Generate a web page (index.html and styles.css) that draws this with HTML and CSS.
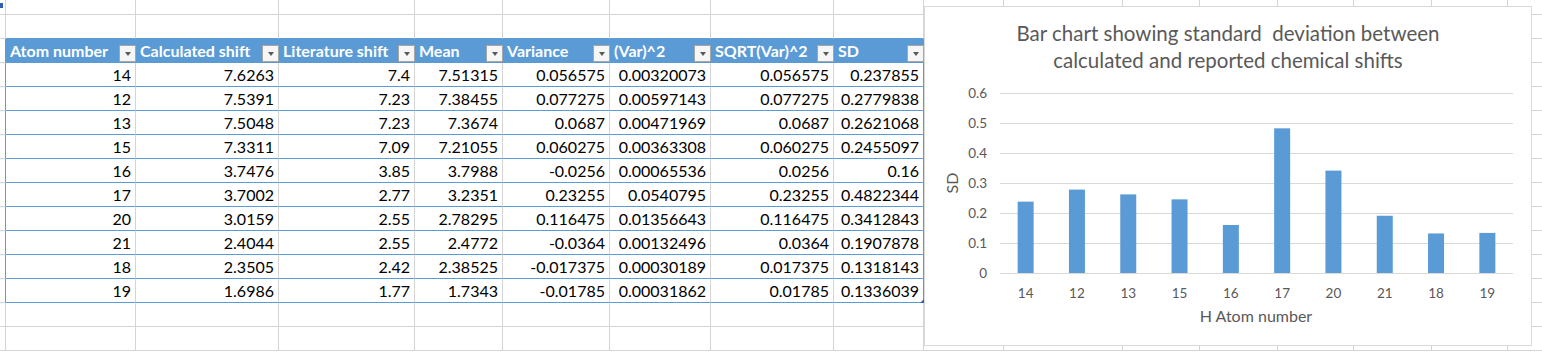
FILE: index.html
```html
<!DOCTYPE html>
<html lang="en">
<head>
    <meta charset="UTF-8">
    <title>Chemical shifts</title>
    <link rel="stylesheet" href="styles.css">
</head>
<body>
    <span class="mark"></span>
    <div class="sheet">
        <div class="row"><div></div><div></div><div></div><div></div><div></div><div></div><div></div><div></div><div></div><div></div><div></div><div></div><div></div><div></div><div></div><div></div><div></div></div>
        <div class="row cap"><div></div><div></div><div></div><div></div><div></div><div></div><div></div><div></div><div></div><div></div><div></div><div></div><div></div><div></div><div></div><div></div><div></div></div>
        <div class="row head">
            <div></div>
            <div><span>Atom number</span><i class="dd"></i></div>
            <div><span>Calculated shift</span><i class="dd"></i></div>
            <div><span>Literature shift</span><i class="dd"></i></div>
            <div><span>Mean</span><i class="dd"></i></div>
            <div><span>Variance</span><i class="dd"></i></div>
            <div><span>(Var)^2</span><i class="dd"></i></div>
            <div><span>SQRT(Var)^2</span><i class="dd"></i></div>
            <div><span>SD</span><i class="dd"></i></div>
            <div></div><div></div><div></div><div></div><div></div><div></div><div></div><div></div>
        </div>
        <div class="row data"><div></div><div>14</div><div>7.6263</div><div>7.4</div><div>7.51315</div><div>0.056575</div><div>0.00320073</div><div>0.056575</div><div>0.237855</div><div></div><div></div><div></div><div></div><div></div><div></div><div></div><div></div></div>
        <div class="row data"><div></div><div>12</div><div>7.5391</div><div>7.23</div><div>7.38455</div><div>0.077275</div><div>0.00597143</div><div>0.077275</div><div>0.2779838</div><div></div><div></div><div></div><div></div><div></div><div></div><div></div><div></div></div>
        <div class="row data"><div></div><div>13</div><div>7.5048</div><div>7.23</div><div>7.3674</div><div>0.0687</div><div>0.00471969</div><div>0.0687</div><div>0.2621068</div><div></div><div></div><div></div><div></div><div></div><div></div><div></div><div></div></div>
        <div class="row data"><div></div><div>15</div><div>7.3311</div><div>7.09</div><div>7.21055</div><div>0.060275</div><div>0.00363308</div><div>0.060275</div><div>0.2455097</div><div></div><div></div><div></div><div></div><div></div><div></div><div></div><div></div></div>
        <div class="row data"><div></div><div>16</div><div>3.7476</div><div>3.85</div><div>3.7988</div><div>-0.0256</div><div>0.00065536</div><div>0.0256</div><div>0.16</div><div></div><div></div><div></div><div></div><div></div><div></div><div></div><div></div></div>
        <div class="row data"><div></div><div>17</div><div>3.7002</div><div>2.77</div><div>3.2351</div><div>0.23255</div><div>0.0540795</div><div>0.23255</div><div>0.4822344</div><div></div><div></div><div></div><div></div><div></div><div></div><div></div><div></div></div>
        <div class="row data"><div></div><div>20</div><div>3.0159</div><div>2.55</div><div>2.78295</div><div>0.116475</div><div>0.01356643</div><div>0.116475</div><div>0.3412843</div><div></div><div></div><div></div><div></div><div></div><div></div><div></div><div></div></div>
        <div class="row data"><div></div><div>21</div><div>2.4044</div><div>2.55</div><div>2.4772</div><div>-0.0364</div><div>0.00132496</div><div>0.0364</div><div>0.1907878</div><div></div><div></div><div></div><div></div><div></div><div></div><div></div><div></div></div>
        <div class="row data"><div></div><div>18</div><div>2.3505</div><div>2.42</div><div>2.38525</div><div>-0.017375</div><div>0.00030189</div><div>0.017375</div><div>0.1318143</div><div></div><div></div><div></div><div></div><div></div><div></div><div></div><div></div></div>
        <div class="row data last"><div></div><div>19</div><div>1.6986</div><div>1.77</div><div>1.7343</div><div>-0.01785</div><div>0.00031862</div><div>0.01785</div><div class="handle">0.1336039</div><div></div><div></div><div></div><div></div><div></div><div></div><div></div><div></div></div>
        <div class="row"><div></div><div></div><div></div><div></div><div></div><div></div><div></div><div></div><div></div><div></div><div></div><div></div><div></div><div></div><div></div><div></div><div></div></div>
        <div class="row"><div></div><div></div><div></div><div></div><div></div><div></div><div></div><div></div><div></div><div></div><div></div><div></div><div></div><div></div><div></div><div></div><div></div></div>
    </div>

    <div class="chart">
        <h2>Bar chart showing standard&nbsp; deviation between<br>calculated and reported chemical shifts</h2>
        <svg width="606" height="270" viewBox="0 0 606 270">
            <g class="grid">
                <line x1="75" x2="588" y1="19.5" y2="19.5"/>
                <line x1="75" x2="588" y1="49.5" y2="49.5"/>
                <line x1="75" x2="588" y1="79.5" y2="79.5"/>
                <line x1="75" x2="588" y1="109.5" y2="109.5"/>
                <line x1="75" x2="588" y1="139.5" y2="139.5"/>
                <line x1="75" x2="588" y1="169.5" y2="169.5"/>
                <line x1="75" x2="588" y1="199.5" y2="199.5"/>
            </g>
            <g class="ticks" text-anchor="end">
                <text x="62" y="24">0.6</text>
                <text x="62" y="54">0.5</text>
                <text x="62" y="84">0.4</text>
                <text x="62" y="114">0.3</text>
                <text x="62" y="144">0.2</text>
                <text x="62" y="174">0.1</text>
                <text x="62" y="204">0</text>
            </g>
            <g class="bars">
                <rect x="92.65" y="127.64" width="16" height="71.36"/>
                <rect x="143.95" y="115.6" width="16" height="83.4"/>
                <rect x="195.25" y="120.37" width="16" height="78.63"/>
                <rect x="246.55" y="125.35" width="16" height="73.65"/>
                <rect x="297.85" y="151" width="16" height="48"/>
                <rect x="349.15" y="54.33" width="16" height="144.67"/>
                <rect x="400.45" y="96.61" width="16" height="102.39"/>
                <rect x="451.75" y="141.76" width="16" height="57.24"/>
                <rect x="503.05" y="159.46" width="16" height="39.54"/>
                <rect x="554.35" y="158.92" width="16" height="40.08"/>
            </g>
            <g class="ticks" text-anchor="middle">
                <text x="100.65" y="224">14</text>
                <text x="151.95" y="224">12</text>
                <text x="203.25" y="224">13</text>
                <text x="254.55" y="224">15</text>
                <text x="305.85" y="224">16</text>
                <text x="357.15" y="224">17</text>
                <text x="408.45" y="224">20</text>
                <text x="459.75" y="224">21</text>
                <text x="511.05" y="224">18</text>
                <text x="562.35" y="224">19</text>
            </g>
            <text class="axis" x="331" y="248" text-anchor="middle">H Atom number</text>
            <text class="axis" x="0" y="0" text-anchor="middle" transform="translate(33 109) rotate(-90)">SD</text>
        </svg>
    </div>
</body>
</html>
```

FILE: styles.css
```css
body {
    margin: 0;
    height: 355px;
    overflow: hidden;
    position: relative;
    background-color: #fff;
    font-family: Lato, "Liberation Sans", sans-serif;
    color: #000;
}
.mark {
    position: absolute;
    left: 0;
    top: 3px;
    width: 3px;
    height: 5px;
    background-color: #2f5fb3;
    z-index: 2;
}
.sheet {
    margin-top: -9px;
}
.row {
    display: grid;
    grid-template-columns: 6px 130px 143px 136px 88px 107px 101px 123px 90px 80px 119px 77px 78px 76px 78px 76px 60px;
    height: 24px;
}
.row > div {
    box-sizing: border-box;
    min-width: 0;
    border-right: 1px solid #d4d4d4;
    border-bottom: 1px solid #d4d4d4;
}
.cap > div:nth-child(n+2):nth-child(-n+9) {
    border-bottom-color: #5b9bd5;
}
.head > div:first-child, .data > div:first-child {
    border-right-color: #5b9bd5;
}
.head > div:nth-child(n+2):nth-child(-n+9) {
    display: flex;
    align-items: center;
    padding-left: 4px;
    background-color: #5b9bd5;
    border-color: #5b9bd5;
    color: #fff;
    font-weight: 700;
    font-size: 16px;
}
.head span {
    flex: 1;
    white-space: nowrap;
    overflow: hidden;
}
.dd {
    align-self: flex-end;
    flex: none;
    display: flex;
    align-items: center;
    justify-content: center;
    box-sizing: border-box;
    width: 17px;
    height: 17px;
    margin-right: -1px;
    border: 1px solid #a6a6a6;
    background-color: #f6f6f6;
}
.dd::after {
    content: "";
    margin-top: 3px;
    border: 3.5px solid transparent;
    border-top: 4px solid #595959;
}
.data > div:nth-child(n+2):nth-child(-n+9) {
    border-bottom-color: #5b9bd5;
    padding-right: 4px;
    text-align: right;
    font-size: 16px;
    line-height: 23px;
    white-space: nowrap;
}
.head > div:nth-child(9), .data > div:nth-child(9) {
    border-right-color: #5b9bd5;
}
.handle {
    position: relative;
}
.handle::after {
    content: "";
    position: absolute;
    right: -1px;
    bottom: -1px;
    border-left: 4px solid transparent;
    border-bottom: 4px solid #3a5fb0;
}
.chart {
    position: absolute;
    left: 924px;
    top: 6px;
    width: 608px;
    height: 340px;
    box-sizing: border-box;
    border: 1px solid #d9d9d9;
    background-color: #fff;
    color: #595959;
}
.chart h2 {
    margin: 0;
    padding-top: 13px;
    font-size: 20.5px;
    line-height: 27px;
    font-weight: 400;
    text-align: center;
}
.chart svg {
    display: block;
}
.grid line {
    stroke: #d9d9d9;
    stroke-width: 1;
}
.bars rect {
    fill: #5b9bd5;
}
.chart text {
    fill: #595959;
    font-family: Lato, "Liberation Sans", sans-serif;
    font-size: 13.5px;
}
.chart text.axis {
    font-size: 16px;
}
```
